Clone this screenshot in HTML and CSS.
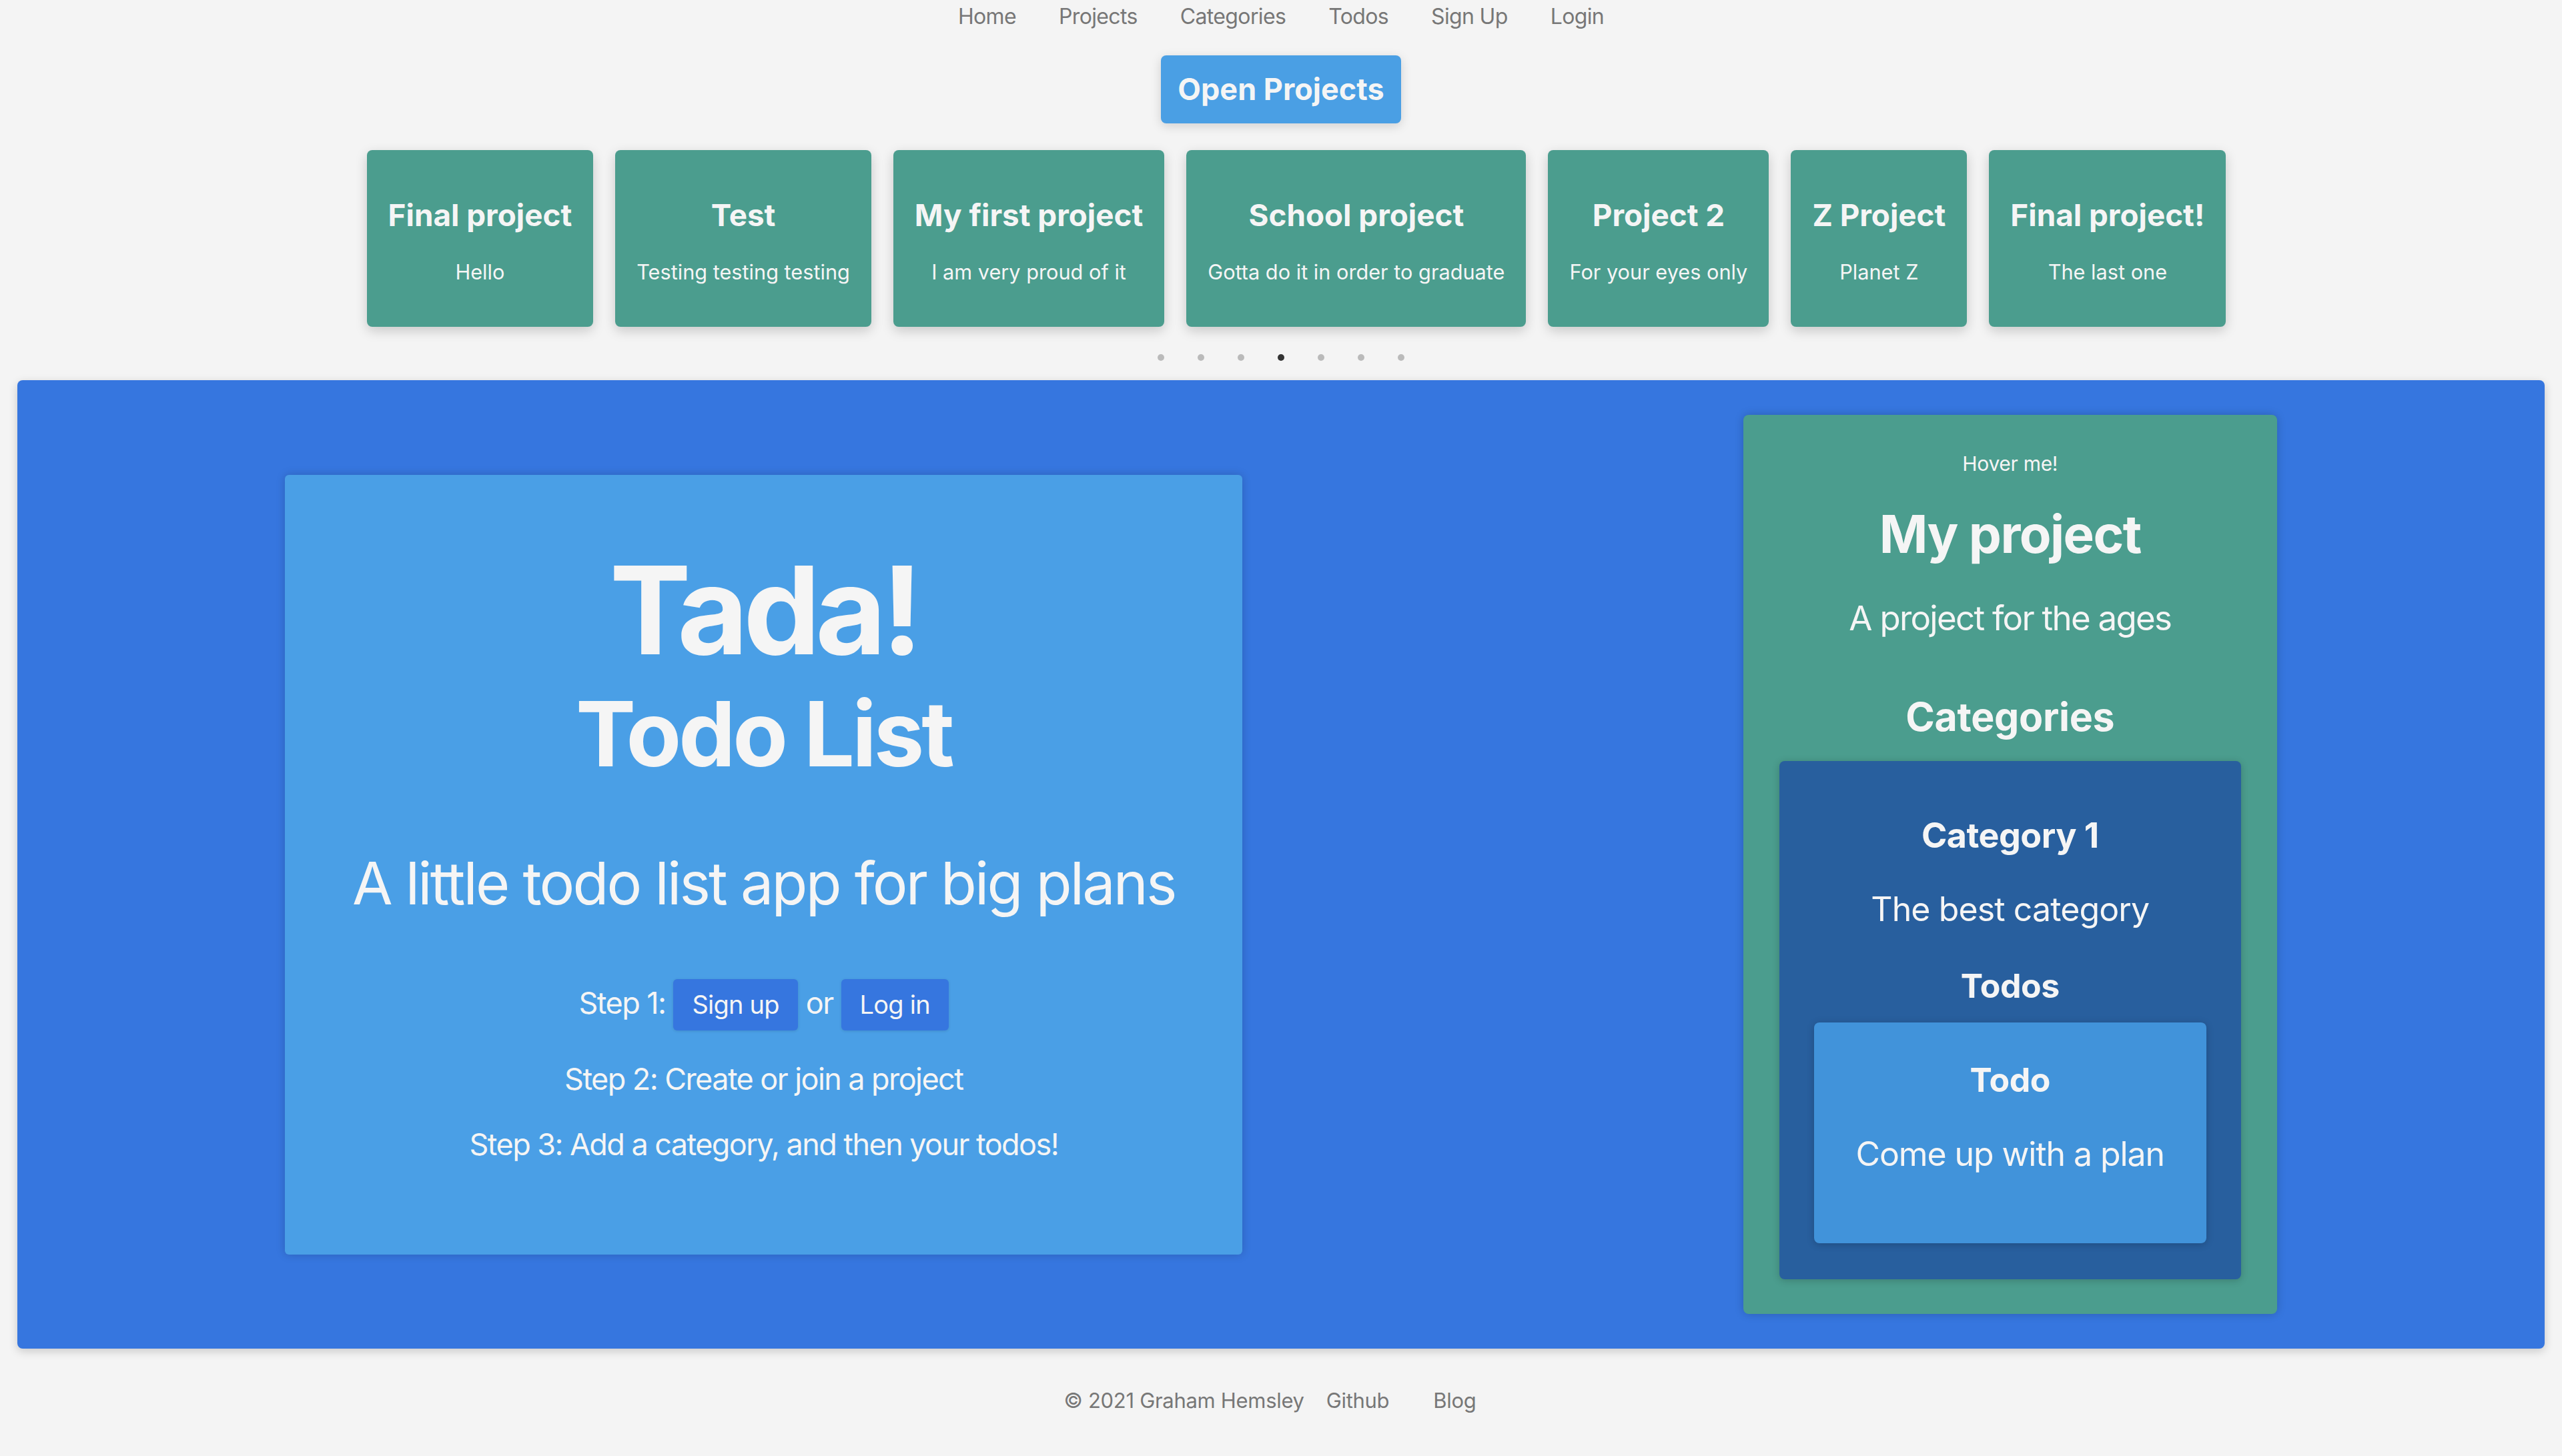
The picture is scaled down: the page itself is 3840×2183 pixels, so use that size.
FILE: index.html
```html
<!DOCTYPE html>
<html lang="en">
<head>
<meta charset="utf-8">
<title>Tada! Todo List</title>
<link rel="stylesheet" href="styles.css">
</head>
<body>
<nav class="nav">
  <a class="nav-link" href="#">Home</a>
  <a class="nav-link" href="#">Projects</a>
  <a class="nav-link" href="#">Categories</a>
  <a class="nav-link" href="#">Todos</a>
  <a class="nav-link" href="#">Sign Up</a>
  <a class="nav-link" href="#">Login</a>
</nav>

<section class="top">
  <button class="open-btn">Open Projects</button>
  <div class="cards">
    <div class="card"><h3 class="card-title">Final project</h3><p class="card-desc">Hello</p></div>
    <div class="card"><h3 class="card-title">Test</h3><p class="card-desc">Testing testing testing</p></div>
    <div class="card"><h3 class="card-title">My first project</h3><p class="card-desc">I am very proud of it</p></div>
    <div class="card"><h3 class="card-title">School project</h3><p class="card-desc">Gotta do it in order to graduate</p></div>
    <div class="card"><h3 class="card-title">Project 2</h3><p class="card-desc">For your eyes only</p></div>
    <div class="card"><h3 class="card-title">Z Project</h3><p class="card-desc">Planet Z</p></div>
    <div class="card"><h3 class="card-title">Final project!</h3><p class="card-desc">The last one</p></div>
  </div>
  <div class="dots">
    <span class="dot"></span><span class="dot"></span><span class="dot"></span><span class="dot active"></span><span class="dot"></span><span class="dot"></span><span class="dot"></span>
  </div>
</section>

<main class="stage">
  <div class="hero">
    <h1 class="hero-title">Tada!</h1>
    <h2 class="hero-sub">Todo List</h2>
    <p class="hero-tag">A little todo list app for big plans</p>
    <div class="step-row">
      <span>Step 1:</span>
      <a class="btn-small" href="#">Sign up</a>
      <span>or</span>
      <a class="btn-small" href="#">Log in</a>
    </div>
    <p class="step">Step 2: Create or join a project</p>
    <p class="step step-last">Step 3: Add a category, and then your todos!</p>
  </div>

  <div class="project">
    <p class="hover">Hover me!</p>
    <h2 class="project-title">My project</h2>
    <p class="project-desc">A project for the ages</p>
    <h3 class="categories-title">Categories</h3>
    <div class="category">
      <h4 class="category-title">Category 1</h4>
      <p class="category-desc">The best category</p>
      <h4 class="todos-title">Todos</h4>
      <div class="todo">
        <h5 class="todo-title">Todo</h5>
        <p class="todo-desc">Come up with a plan</p>
      </div>
    </div>
  </div>
</main>

<footer class="footer">
  <span class="copy">© 2021 Graham Hemsley</span>
  <a class="foot-link" href="#">Github</a>
  <a class="foot-link" href="#">Blog</a>
</footer>
</body>
</html>
```

FILE: styles.css
```css
* { box-sizing: border-box; }
html, body { margin: 0; padding: 0; }
body {
  background: #f4f4f4;
  font-family: Inter, "Noto Sans", "Liberation Sans", sans-serif;
  color: #f5f5f5;
}

/* nav */
.nav {
  display: flex;
  justify-content: center;
  gap: 64px;
  padding-top: 5px;
}
.nav-link {
  font-size: 32px;
  line-height: 40px;
  color: #777777;
  text-decoration: none;
  letter-spacing: -0.02em;
}

/* top carousel */
.top {
  display: flex;
  flex-direction: column;
  align-items: center;
}
.open-btn {
  margin-top: 38px;
  background: #4a9fe4;
  color: #f5f5f5;
  font-family: inherit;
  font-weight: 700;
  font-size: 45px;
  line-height: 54px;
  padding: 24px 25px;
  border: 0;
  border-radius: 8px;
  box-shadow: 0 4px 16px rgba(0, 0, 0, 0.15);
}
.cards {
  display: flex;
  gap: 33px;
  margin-top: 40px;
  padding-left: 46px;
}
.card {
  background: #4b9d8e;
  border-radius: 8px;
  padding: 71px 32px 64px;
  text-align: center;
  box-shadow: 0 6px 18px rgba(0, 0, 0, 0.18);
}
.card-title {
  margin: 0 0 41px;
  font-size: 45.8px;
  line-height: 53px;
  font-weight: 700;
  white-space: nowrap;
}
.card-desc {
  margin: 0;
  font-size: 30.7px;
  line-height: 36px;
  white-space: nowrap;
}
.dots {
  display: flex;
  gap: 50px;
  margin-top: 41px;
}
.dot {
  width: 10px;
  height: 10px;
  border-radius: 50%;
  background: #bababa;
}
.dot.active { background: #333333; }

/* stage */
.stage {
  margin: 29px 26px 0;
  background: #3676df;
  border-radius: 8px;
  padding: 52px 26px;
  display: flex;
  justify-content: space-around;
  align-items: center;
  box-shadow: 0 4px 14px rgba(0, 0, 0, 0.18);
}

.hero {
  width: 1435px;
  padding: 111px 0 138px;
  background: #4a9fe6;
  border-radius: 6px;
  text-align: center;
  box-shadow: 0 0 14px rgba(0, 0, 0, 0.18);
}
.hero-title {
  margin: 0;
  font-size: 183px;
  line-height: 1;
  font-weight: 700;
  letter-spacing: -0.04em;
}
.hero-sub {
  margin: 27px 0 0;
  font-size: 135px;
  line-height: 1;
  font-weight: 700;
  letter-spacing: -0.03em;
}
.hero-tag {
  margin: 103px 0 0;
  font-size: 88px;
  line-height: 107px;
  font-weight: 400;
  letter-spacing: -0.032em;
}
.step-row {
  margin-top: 90px;
  display: flex;
  justify-content: center;
  align-items: baseline;
  gap: 12px;
  font-size: 45px;
  line-height: 54px;
  letter-spacing: -0.035em;
}
.btn-small {
  display: inline-block;
  font-size: 38px;
  line-height: 46px;
  padding: 15px 28px 16px;
  background: #3676df;
  color: #f5f5f5;
  border-radius: 6px;
  text-decoration: none;
  letter-spacing: -0.02em;
  box-shadow: 0 1px 4px rgba(0, 0, 0, 0.12);
}
.step {
  margin: 46px 0 0;
  font-size: 45px;
  line-height: 54px;
  letter-spacing: -0.035em;
}
.step-last { margin-top: 44px; }

/* project panel */
.project {
  width: 800px;
  padding: 55px 54px 52px;
  background: #4b9d8e;
  border-radius: 8px;
  text-align: center;
  box-shadow: 0 0 14px rgba(0, 0, 0, 0.2);
}
.hover {
  margin: 0;
  font-size: 30px;
  line-height: 36px;
  letter-spacing: -0.01em;
}
.project-title {
  margin: 41px 0 0;
  font-size: 78px;
  line-height: 94px;
  font-weight: 700;
  letter-spacing: -0.02em;
}
.project-desc {
  margin: 48px 0 0;
  font-size: 51px;
  line-height: 61px;
  letter-spacing: -0.034em;
}
.categories-title {
  margin: 82px 0 0;
  font-size: 59px;
  line-height: 71px;
  font-weight: 700;
  letter-spacing: -0.005em;
}
.category {
  margin-top: 31px;
  background: #285f9e;
  border-radius: 8px;
  padding: 81px 52px 54px;
  box-shadow: 0 2px 12px rgba(0, 0, 0, 0.2);
}
.category-title {
  margin: 0;
  font-size: 52px;
  line-height: 62px;
  font-weight: 700;
  letter-spacing: -0.01em;
}
.category-desc {
  margin: 49px 0 0;
  font-size: 50px;
  line-height: 60px;
  letter-spacing: -0.018em;
}
.todos-title {
  margin: 55px 0 0;
  font-size: 50px;
  line-height: 60px;
  font-weight: 700;
  letter-spacing: -0.01em;
}
.todo {
  margin-top: 25px;
  background: #4193da;
  border-radius: 8px;
  padding: 56px 20px 104px;
  box-shadow: 0 2px 12px rgba(0, 0, 0, 0.2);
}
.todo-title {
  margin: 0;
  font-size: 50px;
  line-height: 60px;
  font-weight: 700;
  letter-spacing: -0.01em;
}
.todo-desc {
  margin: 51px 0 0;
  font-size: 50px;
  line-height: 60px;
  letter-spacing: -0.022em;
}

/* footer */
.footer {
  display: flex;
  justify-content: center;
  margin-top: 59px;
  font-size: 31px;
  line-height: 37px;
  color: #777777;
  letter-spacing: -0.01em;
}
.foot-link {
  color: #777777;
  text-decoration: none;
  padding: 0 33px;
}
```
